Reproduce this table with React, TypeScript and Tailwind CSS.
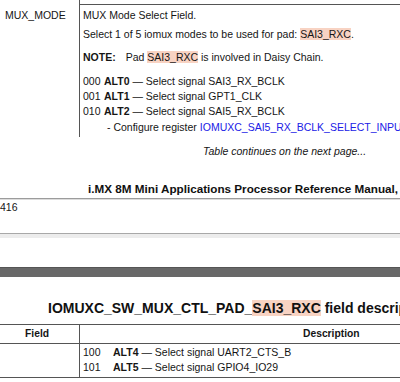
const Hl = ({ children }: { children: React.ReactNode }) => (
  <span className="bg-[#f8d3c3]">{children}</span>
);

const AltRow = ({ code, alt, signal, codeWidth }: { code: string; alt: string; signal: string; codeWidth: string }) => (
  <div className="flex h-[15px] leading-[15px]">
    <span className={`shrink-0 ${codeWidth}`}>{code}</span>
    <span className="shrink-0">
      <b>{alt}</b> — Select signal {signal}
    </span>
  </div>
);

export default function App() {
  return (
    <div className="h-[382px] w-[400px] overflow-hidden whitespace-nowrap bg-white font-['Liberation_Sans',Arial,sans-serif] text-[10.5px] text-[#151515]">
      {/* table continued from previous page */}
      <div className="flex h-[137px]">
        <div className="w-[80px] shrink-0 border-r border-[#555] pl-[5px] pt-[8px] leading-[15px]">MUX_MODE</div>
        <div className="mt-[4px] flex-1 border-t border-[#555] pl-[3px] pt-[3px] leading-[15px]">
          <div className="h-[15px]">MUX Mode Select Field.</div>
          <div className="mt-[4px] h-[15px]">
            Select 1 of 5 iomux modes to be used for pad: <Hl>SAI3_RXC</Hl>.
          </div>
          <div className="mt-[8px] h-[15px]">
            <b>NOTE:</b>
            <span className="ml-[10px]">Pad </span>
            <Hl>SAI3_RXC</Hl> is involved in Daisy Chain.
          </div>
          <div className="mt-[9px]">
            <AltRow code="000" alt="ALT0" signal="SAI3_RX_BCLK" codeWidth="w-[21px]" />
            <AltRow code="001" alt="ALT1" signal="GPT1_CLK" codeWidth="w-[21px]" />
            <AltRow code="010" alt="ALT2" signal="SAI5_RX_BCLK" codeWidth="w-[21px]" />
          </div>
          <div className="mt-[1px] h-[15px] pl-[24px]">
            - Configure register <span className="text-[#2020e6]">IOMUXC_SAI5_RX_BCLK_SELECT_INPUT</span>
          </div>
        </div>
      </div>

      <div className="mt-[7px] h-[15px] pl-[203px] leading-[15px] italic">Table continues on the next page...</div>

      <div className="mt-[22px] h-[17px] pl-[88px] text-[11.7px] leading-[15px] font-bold text-[#111]">
        i.MX 8M Mini Applications Processor Reference Manual, Rev. 3
      </div>

      {/* page footer */}
      <div className="border-t border-[#9c9c9c]">
        <div className="h-[34px] border-t border-[#dcdcdc] leading-[15px]">416</div>
      </div>
      <div className="h-[5px] border-t border-[#a8a8a8] bg-[#ececec]" />
      <div className="h-[29px]" />
      <div className="h-[10px] border-t border-[#555] bg-[#686868]" />

      {/* next page */}
      <div className="mt-[23px] h-[24px] pl-[48px] text-[14px] leading-[17px] font-bold text-[#111]">
        IOMUXC_SW_MUX_CTL_PAD_<Hl>SAI3_RXC</Hl> field descriptions (continued)
      </div>

      <div className="border-t border-b border-[#555]">
        <div className="flex h-[19px] border-b border-[#555] text-[10.3px] font-bold leading-[18px]">
          <div className="w-[80px] shrink-0 border-r border-[#555] pl-[25px]">Field</div>
          <div className="pl-[223px]">Description</div>
        </div>
        <div className="flex h-[33px]">
          <div className="w-[80px] shrink-0 border-r border-[#555]" />
          <div className="pl-[3px] pt-[1px]">
            <AltRow code="100" alt="ALT4" signal="UART2_CTS_B" codeWidth="w-[30px]" />
            <AltRow code="101" alt="ALT5" signal="GPIO4_IO29" codeWidth="w-[30px]" />
          </div>
        </div>
      </div>
    </div>
  );
}
